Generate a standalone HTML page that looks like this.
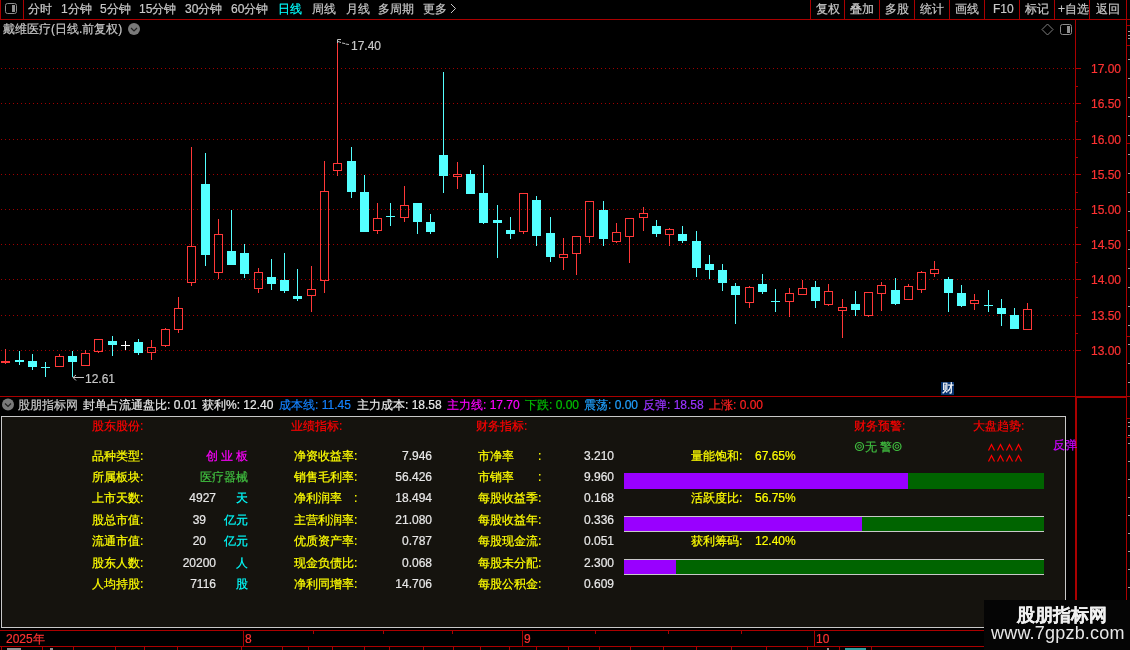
<!DOCTYPE html>
<html><head><meta charset="utf-8">
<style>
html,body{margin:0;padding:0;}
body{width:1130px;height:650px;background:#000;overflow:hidden;position:relative;font-family:"Liberation Sans",sans-serif;font-size:12px;}
.t{position:absolute;white-space:nowrap;line-height:16px;-webkit-text-stroke:0.2px currentColor;}
.r{text-align:right;}
.abs{position:absolute;}
svg{position:absolute;left:0;top:0;}
</style></head><body>
<svg width="1130" height="650" viewBox="0 0 1130 650" shape-rendering="crispEdges">
<!-- toolbar -->
<rect x="0" y="0" width="1" height="19" fill="#aa0000"/>
<rect x="23" y="0" width="1" height="19" fill="#aa0000"/>
<rect x="0" y="19" width="1130" height="1" fill="#aa0000"/>
<rect x="810" y="0" width="1" height="19" fill="#aa0000"/><rect x="844" y="0" width="1" height="19" fill="#aa0000"/><rect x="879" y="0" width="1" height="19" fill="#aa0000"/><rect x="914" y="0" width="1" height="19" fill="#aa0000"/><rect x="949" y="0" width="1" height="19" fill="#aa0000"/><rect x="984" y="0" width="1" height="19" fill="#aa0000"/><rect x="1019" y="0" width="1" height="19" fill="#aa0000"/><rect x="1054" y="0" width="1" height="19" fill="#aa0000"/><rect x="1089" y="0" width="1" height="19" fill="#aa0000"/><rect x="1126" y="0" width="1" height="19" fill="#aa0000"/>
<rect x="5.5" y="3.5" width="11" height="10" rx="2" fill="none" stroke="#8c8c8c" stroke-width="1" shape-rendering="geometricPrecision"/>
<rect x="12" y="5" width="3" height="7" fill="#909090"/>
<path d="M451 4 L455.5 8.5 L451 13" fill="none" stroke="#c8c8c8" stroke-width="1" shape-rendering="geometricPrecision"/>
<!-- chart frame -->
<rect x="1075" y="20" width="1" height="611" fill="#aa0000"/>
<rect x="1126" y="20" width="1" height="611" fill="#aa0000"/>
<rect x="1126" y="25" width="4" height="1" fill="#aa0000"/>
<rect x="1126" y="45" width="4" height="1" fill="#aa0000"/>
<rect x="0" y="396" width="1130" height="1" fill="#aa0000"/>
<!-- diamond & icon -->
<path d="M1047.5 24 L1053 29.5 L1047.5 35 L1042 29.5 Z" fill="none" stroke="#808080" stroke-width="1" shape-rendering="geometricPrecision"/>
<rect x="1060.5" y="24.5" width="11" height="10" rx="2" fill="none" stroke="#8c8c8c" stroke-width="1" shape-rendering="geometricPrecision"/>
<rect x="1067" y="26" width="3" height="7" fill="#909090"/>
<circle cx="134" cy="29" r="6" fill="#7a7a7a" shape-rendering="geometricPrecision"/>
<path d="M131 28 L134 31 L137 28" fill="none" stroke="#222" stroke-width="1.2" shape-rendering="geometricPrecision"/>
<line x1="1" y1="68.5" x2="1075" y2="68.5" stroke="#a00000" stroke-width="1" stroke-dasharray="1 3"/>
<rect x="1075" y="68" width="6" height="1" fill="#aa0000"/>
<line x1="1" y1="103.5" x2="1075" y2="103.5" stroke="#a00000" stroke-width="1" stroke-dasharray="1 3"/>
<rect x="1075" y="103" width="6" height="1" fill="#aa0000"/>
<line x1="1" y1="139.5" x2="1075" y2="139.5" stroke="#a00000" stroke-width="1" stroke-dasharray="1 3"/>
<rect x="1075" y="139" width="6" height="1" fill="#aa0000"/>
<line x1="1" y1="174.5" x2="1075" y2="174.5" stroke="#a00000" stroke-width="1" stroke-dasharray="1 3"/>
<rect x="1075" y="174" width="6" height="1" fill="#aa0000"/>
<line x1="1" y1="209.5" x2="1075" y2="209.5" stroke="#a00000" stroke-width="1" stroke-dasharray="1 3"/>
<rect x="1075" y="209" width="6" height="1" fill="#aa0000"/>
<line x1="1" y1="244.5" x2="1075" y2="244.5" stroke="#a00000" stroke-width="1" stroke-dasharray="1 3"/>
<rect x="1075" y="244" width="6" height="1" fill="#aa0000"/>
<line x1="1" y1="279.5" x2="1075" y2="279.5" stroke="#a00000" stroke-width="1" stroke-dasharray="1 3"/>
<rect x="1075" y="279" width="6" height="1" fill="#aa0000"/>
<line x1="1" y1="315.5" x2="1075" y2="315.5" stroke="#a00000" stroke-width="1" stroke-dasharray="1 3"/>
<rect x="1075" y="315" width="6" height="1" fill="#aa0000"/>
<line x1="1" y1="350.5" x2="1075" y2="350.5" stroke="#a00000" stroke-width="1" stroke-dasharray="1 3"/>
<rect x="1075" y="350" width="6" height="1" fill="#aa0000"/>
<rect x="1075" y="86" width="3" height="1" fill="#aa0000"/>
<rect x="1075" y="121" width="3" height="1" fill="#aa0000"/>
<rect x="1075" y="157" width="3" height="1" fill="#aa0000"/>
<rect x="1075" y="192" width="3" height="1" fill="#aa0000"/>
<rect x="1075" y="227" width="3" height="1" fill="#aa0000"/>
<rect x="1075" y="262" width="3" height="1" fill="#aa0000"/>
<rect x="1075" y="297" width="3" height="1" fill="#aa0000"/>
<rect x="1075" y="333" width="3" height="1" fill="#aa0000"/>
<rect x="5" y="349" width="1" height="12" fill="#ff3838"/>
<rect x="5" y="363" width="1" height="1" fill="#ff3838"/>
<rect x="1" y="361" width="9" height="2" fill="#ff3838"/>
<rect x="19" y="351" width="1" height="14" fill="#54ffff"/>
<rect x="15" y="360" width="9" height="2" fill="#54ffff"/>
<rect x="32" y="354" width="1" height="16" fill="#54ffff"/>
<rect x="28" y="361" width="9" height="6" fill="#54ffff"/>
<rect x="45" y="362" width="1" height="15" fill="#54ffff"/>
<rect x="41" y="367" width="9" height="1" fill="#54ffff"/>
<rect x="59" y="354" width="1" height="2" fill="#ff3838"/>
<rect x="55.5" y="356.5" width="8" height="10" fill="none" stroke="#ff3838" stroke-width="1"/>
<rect x="72" y="351" width="1" height="26" fill="#54ffff"/>
<rect x="68" y="356" width="9" height="6" fill="#54ffff"/>
<rect x="85" y="350" width="1" height="3" fill="#ff3838"/>
<rect x="81.5" y="353.5" width="8" height="12" fill="none" stroke="#ff3838" stroke-width="1"/>
<rect x="98" y="352" width="1" height="1" fill="#ff3838"/>
<rect x="94.5" y="339.5" width="8" height="12" fill="none" stroke="#ff3838" stroke-width="1"/>
<rect x="112" y="336" width="1" height="20" fill="#54ffff"/>
<rect x="108" y="341" width="9" height="4" fill="#54ffff"/>
<rect x="125" y="341" width="1" height="9" fill="#ffffff"/>
<rect x="121" y="345" width="9" height="1" fill="#ffffff"/>
<rect x="138" y="339" width="1" height="16" fill="#54ffff"/>
<rect x="134" y="342" width="9" height="11" fill="#54ffff"/>
<rect x="151" y="340" width="1" height="7" fill="#ff3838"/>
<rect x="151" y="353" width="1" height="7" fill="#ff3838"/>
<rect x="147.5" y="347.5" width="8" height="5" fill="none" stroke="#ff3838" stroke-width="1"/>
<rect x="165" y="328" width="1" height="1" fill="#ff3838"/>
<rect x="165" y="346" width="1" height="1" fill="#ff3838"/>
<rect x="161.5" y="329.5" width="8" height="16" fill="none" stroke="#ff3838" stroke-width="1"/>
<rect x="178" y="297" width="1" height="11" fill="#ff3838"/>
<rect x="178" y="330" width="1" height="3" fill="#ff3838"/>
<rect x="174.5" y="308.5" width="8" height="21" fill="none" stroke="#ff3838" stroke-width="1"/>
<rect x="191" y="147" width="1" height="99" fill="#ff3838"/>
<rect x="191" y="283" width="1" height="3" fill="#ff3838"/>
<rect x="187.5" y="246.5" width="8" height="36" fill="none" stroke="#ff3838" stroke-width="1"/>
<rect x="205" y="153" width="1" height="113" fill="#54ffff"/>
<rect x="201" y="184" width="9" height="71" fill="#54ffff"/>
<rect x="218" y="219" width="1" height="15" fill="#ff3838"/>
<rect x="218" y="273" width="1" height="6" fill="#ff3838"/>
<rect x="214.5" y="234.5" width="8" height="38" fill="none" stroke="#ff3838" stroke-width="1"/>
<rect x="231" y="210" width="1" height="55" fill="#54ffff"/>
<rect x="227" y="251" width="9" height="14" fill="#54ffff"/>
<rect x="244" y="244" width="1" height="34" fill="#54ffff"/>
<rect x="240" y="253" width="9" height="21" fill="#54ffff"/>
<rect x="258" y="268" width="1" height="4" fill="#ff3838"/>
<rect x="258" y="289" width="1" height="4" fill="#ff3838"/>
<rect x="254.5" y="272.5" width="8" height="16" fill="none" stroke="#ff3838" stroke-width="1"/>
<rect x="271" y="259" width="1" height="31" fill="#54ffff"/>
<rect x="267" y="277" width="9" height="7" fill="#54ffff"/>
<rect x="284" y="253" width="1" height="40" fill="#54ffff"/>
<rect x="280" y="280" width="9" height="11" fill="#54ffff"/>
<rect x="297" y="269" width="1" height="32" fill="#54ffff"/>
<rect x="293" y="296" width="9" height="3" fill="#54ffff"/>
<rect x="311" y="266" width="1" height="23" fill="#ff3838"/>
<rect x="311" y="296" width="1" height="16" fill="#ff3838"/>
<rect x="307.5" y="289.5" width="8" height="6" fill="none" stroke="#ff3838" stroke-width="1"/>
<rect x="324" y="161" width="1" height="30" fill="#ff3838"/>
<rect x="324" y="281" width="1" height="12" fill="#ff3838"/>
<rect x="320.5" y="191.5" width="8" height="89" fill="none" stroke="#ff3838" stroke-width="1"/>
<rect x="337" y="43" width="1" height="120" fill="#ff3838"/>
<rect x="337" y="171" width="1" height="5" fill="#ff3838"/>
<rect x="333.5" y="163.5" width="8" height="7" fill="none" stroke="#ff3838" stroke-width="1"/>
<rect x="351" y="147" width="1" height="51" fill="#54ffff"/>
<rect x="347" y="161" width="9" height="31" fill="#54ffff"/>
<rect x="364" y="175" width="1" height="57" fill="#54ffff"/>
<rect x="360" y="192" width="9" height="40" fill="#54ffff"/>
<rect x="377" y="203" width="1" height="15" fill="#ff3838"/>
<rect x="377" y="231" width="1" height="3" fill="#ff3838"/>
<rect x="373.5" y="218.5" width="8" height="12" fill="none" stroke="#ff3838" stroke-width="1"/>
<rect x="390" y="203" width="1" height="23" fill="#54ffff"/>
<rect x="386" y="216" width="9" height="1" fill="#54ffff"/>
<rect x="404" y="186" width="1" height="19" fill="#ff3838"/>
<rect x="404" y="218" width="1" height="4" fill="#ff3838"/>
<rect x="400.5" y="205.5" width="8" height="12" fill="none" stroke="#ff3838" stroke-width="1"/>
<rect x="417" y="203" width="1" height="31" fill="#54ffff"/>
<rect x="413" y="203" width="9" height="19" fill="#54ffff"/>
<rect x="430" y="214" width="1" height="20" fill="#54ffff"/>
<rect x="426" y="222" width="9" height="10" fill="#54ffff"/>
<rect x="443" y="72" width="1" height="121" fill="#54ffff"/>
<rect x="439" y="155" width="9" height="21" fill="#54ffff"/>
<rect x="457" y="162" width="1" height="12" fill="#ff3838"/>
<rect x="457" y="177" width="1" height="12" fill="#ff3838"/>
<rect x="453.5" y="174.5" width="8" height="2" fill="none" stroke="#ff3838" stroke-width="1"/>
<rect x="470" y="170" width="1" height="24" fill="#54ffff"/>
<rect x="466" y="174" width="9" height="20" fill="#54ffff"/>
<rect x="483" y="165" width="1" height="59" fill="#54ffff"/>
<rect x="479" y="193" width="9" height="30" fill="#54ffff"/>
<rect x="497" y="205" width="1" height="53" fill="#54ffff"/>
<rect x="493" y="220" width="9" height="3" fill="#54ffff"/>
<rect x="510" y="217" width="1" height="22" fill="#54ffff"/>
<rect x="506" y="230" width="9" height="4" fill="#54ffff"/>
<rect x="523" y="232" width="1" height="2" fill="#ff3838"/>
<rect x="519.5" y="193.5" width="8" height="38" fill="none" stroke="#ff3838" stroke-width="1"/>
<rect x="536" y="196" width="1" height="50" fill="#54ffff"/>
<rect x="532" y="200" width="9" height="36" fill="#54ffff"/>
<rect x="550" y="217" width="1" height="45" fill="#54ffff"/>
<rect x="546" y="233" width="9" height="24" fill="#54ffff"/>
<rect x="563" y="238" width="1" height="16" fill="#ff3838"/>
<rect x="563" y="258" width="1" height="12" fill="#ff3838"/>
<rect x="559.5" y="254.5" width="8" height="3" fill="none" stroke="#ff3838" stroke-width="1"/>
<rect x="576" y="254" width="1" height="21" fill="#ff3838"/>
<rect x="572.5" y="236.5" width="8" height="17" fill="none" stroke="#ff3838" stroke-width="1"/>
<rect x="589" y="237" width="1" height="6" fill="#ff3838"/>
<rect x="585.5" y="201.5" width="8" height="35" fill="none" stroke="#ff3838" stroke-width="1"/>
<rect x="603" y="201" width="1" height="45" fill="#54ffff"/>
<rect x="599" y="210" width="9" height="29" fill="#54ffff"/>
<rect x="616" y="223" width="1" height="9" fill="#ff3838"/>
<rect x="616" y="242" width="1" height="1" fill="#ff3838"/>
<rect x="612.5" y="232.5" width="8" height="9" fill="none" stroke="#ff3838" stroke-width="1"/>
<rect x="629" y="237" width="1" height="26" fill="#ff3838"/>
<rect x="625.5" y="218.5" width="8" height="18" fill="none" stroke="#ff3838" stroke-width="1"/>
<rect x="643" y="207" width="1" height="6" fill="#ff3838"/>
<rect x="643" y="218" width="1" height="13" fill="#ff3838"/>
<rect x="639.5" y="213.5" width="8" height="4" fill="none" stroke="#ff3838" stroke-width="1"/>
<rect x="656" y="220" width="1" height="17" fill="#54ffff"/>
<rect x="652" y="226" width="9" height="8" fill="#54ffff"/>
<rect x="669" y="228" width="1" height="1" fill="#ff3838"/>
<rect x="669" y="235" width="1" height="11" fill="#ff3838"/>
<rect x="665.5" y="229.5" width="8" height="5" fill="none" stroke="#ff3838" stroke-width="1"/>
<rect x="682" y="226" width="1" height="17" fill="#54ffff"/>
<rect x="678" y="234" width="9" height="7" fill="#54ffff"/>
<rect x="696" y="231" width="1" height="46" fill="#54ffff"/>
<rect x="692" y="241" width="9" height="27" fill="#54ffff"/>
<rect x="709" y="255" width="1" height="24" fill="#54ffff"/>
<rect x="705" y="264" width="9" height="6" fill="#54ffff"/>
<rect x="722" y="264" width="1" height="27" fill="#54ffff"/>
<rect x="718" y="270" width="9" height="13" fill="#54ffff"/>
<rect x="735" y="283" width="1" height="41" fill="#54ffff"/>
<rect x="731" y="286" width="9" height="9" fill="#54ffff"/>
<rect x="749" y="286" width="1" height="1" fill="#ff3838"/>
<rect x="749" y="303" width="1" height="5" fill="#ff3838"/>
<rect x="745.5" y="287.5" width="8" height="15" fill="none" stroke="#ff3838" stroke-width="1"/>
<rect x="762" y="274" width="1" height="20" fill="#54ffff"/>
<rect x="758" y="284" width="9" height="8" fill="#54ffff"/>
<rect x="775" y="289" width="1" height="23" fill="#54ffff"/>
<rect x="771" y="301" width="9" height="1" fill="#54ffff"/>
<rect x="789" y="288" width="1" height="5" fill="#ff3838"/>
<rect x="789" y="302" width="1" height="15" fill="#ff3838"/>
<rect x="785.5" y="293.5" width="8" height="8" fill="none" stroke="#ff3838" stroke-width="1"/>
<rect x="802" y="280" width="1" height="8" fill="#ff3838"/>
<rect x="798.5" y="288.5" width="8" height="6" fill="none" stroke="#ff3838" stroke-width="1"/>
<rect x="815" y="281" width="1" height="27" fill="#54ffff"/>
<rect x="811" y="287" width="9" height="14" fill="#54ffff"/>
<rect x="828" y="284" width="1" height="7" fill="#ff3838"/>
<rect x="828" y="305" width="1" height="1" fill="#ff3838"/>
<rect x="824.5" y="291.5" width="8" height="13" fill="none" stroke="#ff3838" stroke-width="1"/>
<rect x="842" y="299" width="1" height="8" fill="#ff3838"/>
<rect x="842" y="311" width="1" height="27" fill="#ff3838"/>
<rect x="838.5" y="307.5" width="8" height="3" fill="none" stroke="#ff3838" stroke-width="1"/>
<rect x="855" y="291" width="1" height="25" fill="#54ffff"/>
<rect x="851" y="304" width="9" height="6" fill="#54ffff"/>
<rect x="868" y="316" width="1" height="1" fill="#ff3838"/>
<rect x="864.5" y="292.5" width="8" height="23" fill="none" stroke="#ff3838" stroke-width="1"/>
<rect x="881" y="282" width="1" height="3" fill="#ff3838"/>
<rect x="881" y="294" width="1" height="17" fill="#ff3838"/>
<rect x="877.5" y="285.5" width="8" height="8" fill="none" stroke="#ff3838" stroke-width="1"/>
<rect x="895" y="278" width="1" height="27" fill="#54ffff"/>
<rect x="891" y="290" width="9" height="14" fill="#54ffff"/>
<rect x="908" y="284" width="1" height="2" fill="#ff3838"/>
<rect x="904.5" y="286.5" width="8" height="13" fill="none" stroke="#ff3838" stroke-width="1"/>
<rect x="921" y="271" width="1" height="1" fill="#ff3838"/>
<rect x="921" y="290" width="1" height="3" fill="#ff3838"/>
<rect x="917.5" y="272.5" width="8" height="17" fill="none" stroke="#ff3838" stroke-width="1"/>
<rect x="934" y="261" width="1" height="8" fill="#ff3838"/>
<rect x="934" y="274" width="1" height="3" fill="#ff3838"/>
<rect x="930.5" y="269.5" width="8" height="4" fill="none" stroke="#ff3838" stroke-width="1"/>
<rect x="948" y="277" width="1" height="35" fill="#54ffff"/>
<rect x="944" y="279" width="9" height="14" fill="#54ffff"/>
<rect x="961" y="285" width="1" height="22" fill="#54ffff"/>
<rect x="957" y="293" width="9" height="13" fill="#54ffff"/>
<rect x="974" y="294" width="1" height="6" fill="#ff3838"/>
<rect x="974" y="304" width="1" height="6" fill="#ff3838"/>
<rect x="970.5" y="300.5" width="8" height="3" fill="none" stroke="#ff3838" stroke-width="1"/>
<rect x="988" y="290" width="1" height="22" fill="#54ffff"/>
<rect x="984" y="305" width="9" height="1" fill="#54ffff"/>
<rect x="1001" y="299" width="1" height="27" fill="#54ffff"/>
<rect x="997" y="308" width="9" height="6" fill="#54ffff"/>
<rect x="1014" y="308" width="1" height="21" fill="#54ffff"/>
<rect x="1010" y="315" width="9" height="14" fill="#54ffff"/>
<rect x="1027" y="303" width="1" height="6" fill="#ff3838"/>
<rect x="1023.5" y="309.5" width="8" height="20" fill="none" stroke="#ff3838" stroke-width="1"/>
<!-- markers -->
<path d="M337.5 39.5 H341 M337.5 39.5 V43 M338 41.5 L341 42.5 M342 43 L345 43.5 M345.5 44 L349 44.5" fill="none" stroke="#c0c0c0" stroke-width="1" shape-rendering="geometricPrecision"/>

<path d="M73 377.5 L84 377.5 M73 377.5 L76 375 M73 377.5 L76 380.5" stroke="#c8c8c8" stroke-width="1" shape-rendering="geometricPrecision"/>
<rect x="941" y="382" width="13" height="13" fill="#083470"/>
<!-- indicator header icon -->
<circle cx="8" cy="404.5" r="6" fill="#7a7a7a" shape-rendering="geometricPrecision"/>
<path d="M5 403.5 L8 406.5 L11 403.5" fill="none" stroke="#222" stroke-width="1.2" shape-rendering="geometricPrecision"/>
<!-- panel -->
<rect x="1.5" y="416.5" width="1064" height="211" fill="#15130e" stroke="#c8c8c8" stroke-width="1"/>
<rect x="624" y="473" width="284" height="16" fill="#9900ff"/>
<rect x="908" y="473" width="136" height="16" fill="#006400"/>
<rect x="624" y="516" width="420" height="1" fill="#c8c8c8"/>
<rect x="624" y="517" width="238" height="14" fill="#9900ff"/>
<rect x="862" y="517" width="182" height="14" fill="#006400"/>
<rect x="624" y="531" width="420" height="1" fill="#c8c8c8"/>
<rect x="624" y="559" width="420" height="1" fill="#c8c8c8"/>
<rect x="624" y="560" width="52" height="14" fill="#9900ff"/>
<rect x="676" y="560" width="368" height="14" fill="#006400"/>
<rect x="624" y="574" width="420" height="1" fill="#c8c8c8"/>
<!-- date axis -->
<rect x="0" y="630" width="1130" height="1" fill="#aa0000"/>
<rect x="0" y="646" width="1130" height="1" fill="#aa0000"/>
<rect x="243" y="630" width="1" height="16" fill="#aa0000"/>
<rect x="522" y="630" width="1" height="16" fill="#aa0000"/>
<rect x="814" y="630" width="1" height="16" fill="#aa0000"/>
<rect x="313" y="631" width="1" height="3" fill="#aa0000"/><rect x="383" y="631" width="1" height="3" fill="#aa0000"/><rect x="452" y="631" width="1" height="3" fill="#aa0000"/><rect x="595" y="631" width="1" height="3" fill="#aa0000"/><rect x="668" y="631" width="1" height="3" fill="#aa0000"/><rect x="741" y="631" width="1" height="3" fill="#aa0000"/>
<rect x="1" y="646" width="1" height="4" fill="#aa0000"/><rect x="42" y="646" width="1" height="4" fill="#aa0000"/><rect x="73" y="646" width="1" height="4" fill="#aa0000"/><rect x="115" y="646" width="1" height="4" fill="#aa0000"/><rect x="144" y="646" width="1" height="4" fill="#aa0000"/><rect x="177" y="646" width="1" height="4" fill="#aa0000"/><rect x="241" y="646" width="1" height="4" fill="#aa0000"/><rect x="282" y="646" width="1" height="4" fill="#aa0000"/><rect x="308" y="646" width="1" height="4" fill="#aa0000"/><rect x="332" y="646" width="1" height="4" fill="#aa0000"/><rect x="364" y="646" width="1" height="4" fill="#aa0000"/><rect x="389" y="646" width="1" height="4" fill="#aa0000"/><rect x="423" y="646" width="1" height="4" fill="#aa0000"/><rect x="453" y="646" width="1" height="4" fill="#aa0000"/><rect x="480" y="646" width="1" height="4" fill="#aa0000"/><rect x="509" y="646" width="1" height="4" fill="#aa0000"/><rect x="536" y="646" width="1" height="4" fill="#aa0000"/><rect x="568" y="646" width="1" height="4" fill="#aa0000"/><rect x="599" y="646" width="1" height="4" fill="#aa0000"/><rect x="630" y="646" width="1" height="4" fill="#aa0000"/><rect x="663" y="646" width="1" height="4" fill="#aa0000"/><rect x="696" y="646" width="1" height="4" fill="#aa0000"/><rect x="731" y="646" width="1" height="4" fill="#aa0000"/><rect x="766" y="646" width="1" height="4" fill="#aa0000"/><rect x="807" y="646" width="1" height="4" fill="#aa0000"/><rect x="839" y="646" width="1" height="4" fill="#aa0000"/><rect x="871" y="646" width="1" height="4" fill="#aa0000"/>
<rect x="7" y="648" width="14" height="2" fill="#909090"/><rect x="50" y="648" width="3" height="2" fill="#909090"/><rect x="827" y="648" width="2" height="2" fill="#909090"/><rect x="845" y="648" width="21" height="2" fill="#30a0a0"/>
<!-- circles -->
<circle cx="859.5" cy="446.5" r="4" fill="none" stroke="#40c040" stroke-width="1.2" shape-rendering="geometricPrecision"/>
<circle cx="859.5" cy="446.5" r="1.8" fill="none" stroke="#40c040" stroke-width="1" shape-rendering="geometricPrecision"/>
<circle cx="897" cy="446.5" r="4" fill="none" stroke="#40c040" stroke-width="1.2" shape-rendering="geometricPrecision"/>
<circle cx="897" cy="446.5" r="1.8" fill="none" stroke="#40c040" stroke-width="1" shape-rendering="geometricPrecision"/>
<!-- chevrons -->
<path d="M988.5 450.5 L991.5 444.5 L994.5 450.5 M997.5 450.5 L1000.5 444.5 L1003.5 450.5 M1006.5 450.5 L1009.5 444.5 L1012.5 450.5 M1015.5 450.5 L1018.5 444.5 L1021.5 450.5 M988.5 461.5 L991.5 455.5 L994.5 461.5 M997.5 461.5 L1000.5 455.5 L1003.5 461.5 M1006.5 461.5 L1009.5 455.5 L1012.5 461.5 M1015.5 461.5 L1018.5 455.5 L1021.5 461.5 " fill="none" stroke="#ff0000" stroke-width="1.2" shape-rendering="geometricPrecision"/>
<rect x="1075" y="397" width="2" height="253" fill="#aa0000"/>
<rect x="1075" y="396" width="51" height="2" fill="#aa0000"/>
<rect x="1126" y="418" width="4" height="1" fill="#aa0000"/>
<rect x="1126" y="437" width="4" height="1" fill="#aa0000"/>
<rect x="1128" y="31" width="2" height="1" fill="#a0a0a0"/><rect x="1128" y="35" width="2" height="1" fill="#a0a0a0"/><rect x="1128" y="38" width="2" height="1" fill="#a0a0a0"/><rect x="1128" y="59" width="2" height="1" fill="#a0a0a0"/><rect x="1128" y="78" width="2" height="1" fill="#a0a0a0"/><rect x="1128" y="97" width="2" height="1" fill="#a0a0a0"/><rect x="1128" y="116" width="2" height="1" fill="#a0a0a0"/><rect x="1128" y="135" width="2" height="1" fill="#a0a0a0"/><rect x="1128" y="154" width="2" height="1" fill="#a0a0a0"/><rect x="1128" y="173" width="2" height="1" fill="#a0a0a0"/><rect x="1128" y="192" width="2" height="1" fill="#a0a0a0"/><rect x="1128" y="211" width="2" height="1" fill="#a0a0a0"/><rect x="1128" y="230" width="2" height="1" fill="#a0a0a0"/><rect x="1128" y="249" width="2" height="1" fill="#a0a0a0"/><rect x="1128" y="268" width="2" height="1" fill="#a0a0a0"/><rect x="1128" y="287" width="2" height="1" fill="#a0a0a0"/><rect x="1128" y="306" width="2" height="1" fill="#a0a0a0"/><rect x="1128" y="325" width="2" height="1" fill="#a0a0a0"/><rect x="1128" y="344" width="2" height="1" fill="#a0a0a0"/><rect x="1128" y="363" width="2" height="1" fill="#a0a0a0"/><rect x="1128" y="382" width="2" height="1" fill="#a0a0a0"/><rect x="1128" y="422" width="2" height="1" fill="#a0a0a0"/><rect x="1128" y="426" width="2" height="1" fill="#a0a0a0"/><rect x="1128" y="435" width="2" height="1" fill="#a0a0a0"/><rect x="1128" y="443" width="2" height="1" fill="#a0a0a0"/><rect x="1128" y="461" width="2" height="1" fill="#a0a0a0"/><rect x="1128" y="479" width="2" height="1" fill="#a0a0a0"/><rect x="1128" y="497" width="2" height="1" fill="#a0a0a0"/><rect x="1128" y="515" width="2" height="1" fill="#a0a0a0"/><rect x="1128" y="533" width="2" height="1" fill="#a0a0a0"/><rect x="1128" y="551" width="2" height="1" fill="#a0a0a0"/><rect x="1128" y="569" width="2" height="1" fill="#a0a0a0"/><rect x="1128" y="587" width="2" height="1" fill="#a0a0a0"/><rect x="1126" y="143" width="4" height="1" fill="#aa0000"/><rect x="1126" y="336" width="4" height="1" fill="#aa0000"/>
<!-- watermark -->
<rect x="984" y="600" width="146" height="50" fill="#050505"/>
</svg>
<div style="position:absolute;left:0;top:0;width:1130px;height:650px;will-change:transform">
<div class="t" style="left:28px;top:1px;color:#c8c8c8;font-size:12px;">分时</div>
<div class="t" style="left:61px;top:1px;color:#c8c8c8;font-size:12px;">1分钟</div>
<div class="t" style="left:100px;top:1px;color:#c8c8c8;font-size:12px;">5分钟</div>
<div class="t" style="left:139px;top:1px;color:#c8c8c8;font-size:12px;">15分钟</div>
<div class="t" style="left:185px;top:1px;color:#c8c8c8;font-size:12px;">30分钟</div>
<div class="t" style="left:231px;top:1px;color:#c8c8c8;font-size:12px;">60分钟</div>
<div class="t" style="left:278px;top:1px;color:#00ffff;font-size:12px;">日线</div>
<div class="t" style="left:312px;top:1px;color:#c8c8c8;font-size:12px;">周线</div>
<div class="t" style="left:346px;top:1px;color:#c8c8c8;font-size:12px;">月线</div>
<div class="t" style="left:378px;top:1px;color:#c8c8c8;font-size:12px;">多周期</div>
<div class="t" style="left:423px;top:1px;color:#c8c8c8;font-size:12px;">更多</div>
<div class="t" style="left:816px;top:1px;color:#c8c8c8;font-size:12px;">复权</div>
<div class="t" style="left:850px;top:1px;color:#c8c8c8;font-size:12px;">叠加</div>
<div class="t" style="left:885px;top:1px;color:#c8c8c8;font-size:12px;">多股</div>
<div class="t" style="left:920px;top:1px;color:#c8c8c8;font-size:12px;">统计</div>
<div class="t" style="left:955px;top:1px;color:#c8c8c8;font-size:12px;">画线</div>
<div class="t" style="left:993px;top:1px;color:#c8c8c8;font-size:12px;">F10</div>
<div class="t" style="left:1025px;top:1px;color:#c8c8c8;font-size:12px;">标记</div>
<div class="t" style="left:1058px;top:1px;color:#c8c8c8;font-size:12px;">+自选</div>
<div class="t" style="left:1096px;top:1px;color:#c8c8c8;font-size:12px;">返回</div>
<div class="t" style="left:3px;top:21px;color:#c8c8c8;font-size:12px;">戴维医疗(日线.前复权)</div>
<div class="t" style="left:1091px;top:61px;color:#ff3232;font-size:12px;">17.00</div>
<div class="t" style="left:1091px;top:96px;color:#ff3232;font-size:12px;">16.50</div>
<div class="t" style="left:1091px;top:132px;color:#ff3232;font-size:12px;">16.00</div>
<div class="t" style="left:1091px;top:167px;color:#ff3232;font-size:12px;">15.50</div>
<div class="t" style="left:1091px;top:202px;color:#ff3232;font-size:12px;">15.00</div>
<div class="t" style="left:1091px;top:237px;color:#ff3232;font-size:12px;">14.50</div>
<div class="t" style="left:1091px;top:272px;color:#ff3232;font-size:12px;">14.00</div>
<div class="t" style="left:1091px;top:308px;color:#ff3232;font-size:12px;">13.50</div>
<div class="t" style="left:1091px;top:343px;color:#ff3232;font-size:12px;">13.00</div>
<div class="t" style="left:351px;top:38px;color:#c8c8c8;font-size:12px;">17.40</div>
<div class="t" style="left:85px;top:371px;color:#c8c8c8;font-size:12px;">12.61</div>
<div class="t" style="left:18px;top:397px;color:#c8c8c8;font-size:12px;">股朋指标网</div>
<div class="t" style="left:83px;top:397px;color:#e8e8e8;font-size:12px;">封单占流通盘比: 0.01</div>
<div class="t" style="left:202px;top:397px;color:#e8e8e8;font-size:12px;">获利%: 12.40</div>
<div class="t" style="left:279px;top:397px;color:#1482ff;font-size:12px;">成本线: 11.45</div>
<div class="t" style="left:357px;top:397px;color:#e8e8e8;font-size:12px;">主力成本: 18.58</div>
<div class="t" style="left:447px;top:397px;color:#ff00ff;font-size:12px;">主力线: 17.70</div>
<div class="t" style="left:525px;top:397px;color:#00c000;font-size:12px;">下跌: 0.00</div>
<div class="t" style="left:584px;top:397px;color:#20a0ff;font-size:12px;">震荡: 0.00</div>
<div class="t" style="left:643px;top:397px;color:#9933ff;font-size:12px;">反弹: 18.58</div>
<div class="t" style="left:709px;top:397px;color:#ff2020;font-size:12px;">上涨: 0.00</div>
<div class="t" style="left:92px;top:418px;color:#ff0000;font-size:12px;">股东股份:</div>
<div class="t" style="left:291px;top:418px;color:#ff0000;font-size:12px;">业绩指标:</div>
<div class="t" style="left:476px;top:418px;color:#ff0000;font-size:12px;">财务指标:</div>
<div class="t" style="left:854px;top:418px;color:#ff0000;font-size:12px;">财务预警:</div>
<div class="t" style="left:973px;top:418px;color:#ff0000;font-size:12px;">大盘趋势:</div>
<div class="t" style="left:92px;top:448px;color:#ffff00;font-size:12px;">品种类型:</div>
<div class="t" style="left:92px;top:469px;color:#ffff00;font-size:12px;">所属板块:</div>
<div class="t" style="left:92px;top:490px;color:#ffff00;font-size:12px;">上市天数:</div>
<div class="t" style="left:92px;top:512px;color:#ffff00;font-size:12px;">股总市值:</div>
<div class="t" style="left:92px;top:533px;color:#ffff00;font-size:12px;">流通市值:</div>
<div class="t" style="left:92px;top:555px;color:#ffff00;font-size:12px;">股东人数:</div>
<div class="t" style="left:92px;top:576px;color:#ffff00;font-size:12px;">人均持股:</div>
<div class="t" style="left:294px;top:448px;color:#ffff00;font-size:12px;">净资收益率:</div>
<div class="t r" style="right:698px;top:448px;color:#e8e8e8">7.946</div>
<div class="t" style="left:294px;top:469px;color:#ffff00;font-size:12px;">销售毛利率:</div>
<div class="t r" style="right:698px;top:469px;color:#e8e8e8">56.426</div>
<div class="t" style="left:294px;top:490px;color:#ffff00;font-size:12px;">净利润率</div>
<div class="t r" style="right:698px;top:490px;color:#e8e8e8">18.494</div>
<div class="t" style="left:294px;top:512px;color:#ffff00;font-size:12px;">主营利润率:</div>
<div class="t r" style="right:698px;top:512px;color:#e8e8e8">21.080</div>
<div class="t" style="left:294px;top:533px;color:#ffff00;font-size:12px;">优质资产率:</div>
<div class="t r" style="right:698px;top:533px;color:#e8e8e8">0.787</div>
<div class="t" style="left:294px;top:555px;color:#ffff00;font-size:12px;">现金负债比:</div>
<div class="t r" style="right:698px;top:555px;color:#e8e8e8">0.068</div>
<div class="t" style="left:294px;top:576px;color:#ffff00;font-size:12px;">净利同增率:</div>
<div class="t r" style="right:698px;top:576px;color:#e8e8e8">14.706</div>
<div class="t" style="left:478px;top:448px;color:#ffff00;font-size:12px;">市净率</div>
<div class="t r" style="right:516px;top:448px;color:#e8e8e8">3.210</div>
<div class="t" style="left:478px;top:469px;color:#ffff00;font-size:12px;">市销率</div>
<div class="t r" style="right:516px;top:469px;color:#e8e8e8">9.960</div>
<div class="t" style="left:478px;top:490px;color:#ffff00;font-size:12px;">每股收益季:</div>
<div class="t r" style="right:516px;top:490px;color:#e8e8e8">0.168</div>
<div class="t" style="left:478px;top:512px;color:#ffff00;font-size:12px;">每股收益年:</div>
<div class="t r" style="right:516px;top:512px;color:#e8e8e8">0.336</div>
<div class="t" style="left:478px;top:533px;color:#ffff00;font-size:12px;">每股现金流:</div>
<div class="t r" style="right:516px;top:533px;color:#e8e8e8">0.051</div>
<div class="t" style="left:478px;top:555px;color:#ffff00;font-size:12px;">每股未分配:</div>
<div class="t r" style="right:516px;top:555px;color:#e8e8e8">2.300</div>
<div class="t" style="left:478px;top:576px;color:#ffff00;font-size:12px;">每股公积金:</div>
<div class="t r" style="right:516px;top:576px;color:#e8e8e8">0.609</div>
<div class="t r" style="right:882px;top:448px;color:#ff00ff;letter-spacing:3px;margin-right:-3px">创业板</div>
<div class="t r" style="right:882px;top:469px;color:#40c040">医疗器械</div>
<div class="t r" style="right:914px;top:490px;color:#e8e8e8">4927</div>
<div class="t r" style="right:882px;top:490px;color:#00ffff">天</div>
<div class="t r" style="right:924px;top:512px;color:#e8e8e8">39</div>
<div class="t r" style="right:882px;top:512px;color:#00ffff">亿元</div>
<div class="t r" style="right:924px;top:533px;color:#e8e8e8">20</div>
<div class="t r" style="right:882px;top:533px;color:#00ffff">亿元</div>
<div class="t r" style="right:914px;top:555px;color:#e8e8e8">20200</div>
<div class="t r" style="right:882px;top:555px;color:#00ffff">人</div>
<div class="t r" style="right:914px;top:576px;color:#e8e8e8">7116</div>
<div class="t r" style="right:882px;top:576px;color:#00ffff">股</div>
<div class="t" style="left:691px;top:448px;color:#ffff00;font-size:12px;">量能饱和:</div>
<div class="t" style="left:755px;top:448px;color:#ffff00;font-size:12px;">67.65%</div>
<div class="t" style="left:691px;top:490px;color:#ffff00;font-size:12px;">活跃度比:</div>
<div class="t" style="left:755px;top:490px;color:#ffff00;font-size:12px;">56.75%</div>
<div class="t" style="left:691px;top:533px;color:#ffff00;font-size:12px;">获利筹码:</div>
<div class="t" style="left:755px;top:533px;color:#ffff00;font-size:12px;">12.40%</div>
<div class="t" style="left:865px;top:439px;color:#40c040;font-size:12px;">无</div>
<div class="t" style="left:880px;top:439px;color:#40c040;font-size:12px;">警</div>
<div class="t" style="left:354px;top:490px;color:#ffff00;font-size:12px;">:</div>
<div class="t" style="left:538px;top:448px;color:#ffff00;font-size:12px;">:</div>
<div class="t" style="left:538px;top:469px;color:#ffff00;font-size:12px;">:</div>
<div class="t" style="left:1053px;top:437px;color:#cc00ff;font-size:12px;">反弹</div>
<div class="t" style="left:6px;top:631px;color:#ff3232;font-size:12px;">2025年</div>
<div class="t" style="left:245px;top:631px;color:#ff3232;font-size:12px;">8</div>
<div class="t" style="left:524px;top:631px;color:#ff3232;font-size:12px;">9</div>
<div class="t" style="left:816px;top:631px;color:#ff3232;font-size:12px;">10</div>
<div style="position:absolute;left:1065px;top:416px;width:1px;height:184px;background:#c8c8c8"></div>
<div class="t" style="left:941.5px;top:381px;color:#fff;font-size:12px;line-height:15px">财</div>
<div class="t" style="left:1017px;top:604px;color:#f0f0f0;font-size:18px;font-weight:bold;line-height:22px">股朋指标网</div>
<div class="t" style="left:991px;top:622px;color:#e8e8e8;font-size:18px;line-height:22px;letter-spacing:0.2px;-webkit-text-stroke:0">www.7gpzb.com</div>
</div>
</body></html>
